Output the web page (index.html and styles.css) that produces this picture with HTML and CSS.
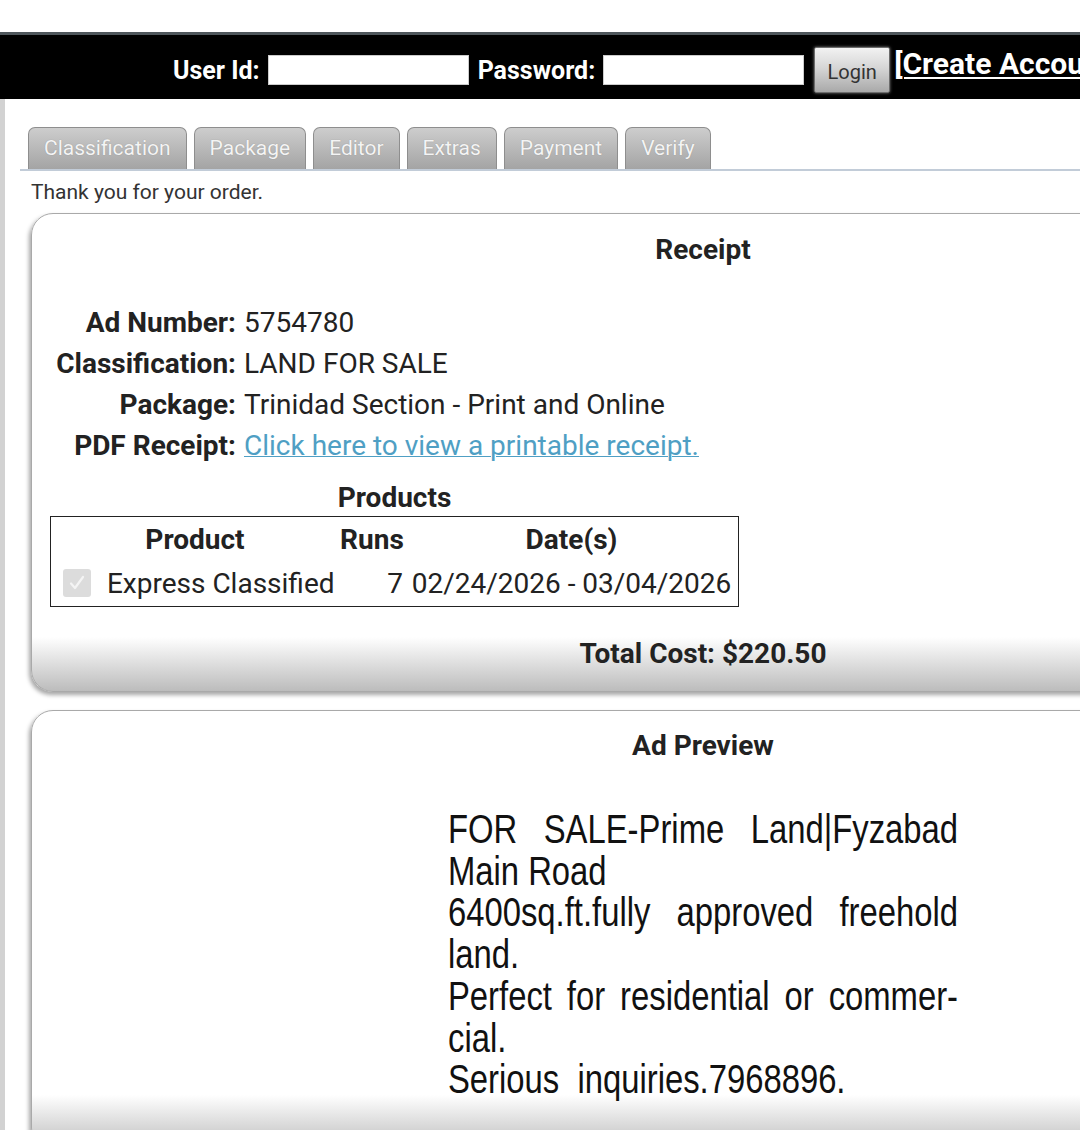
FILE: index.html
```html
<!DOCTYPE html>
<html lang="en">
<head>
    <meta charset="UTF-8">
    <meta name="viewport" content="width=device-width, initial-scale=1.0">
    <title>Classified Ad - Receipt</title>
    <link rel="stylesheet" href="styles.css">
</head>
<body>
    <div class="top-gap"></div>

    <form class="login-bar">
        <label for="userId">User Id:</label>
        <input type="text" id="userId">
        <label for="password">Password:</label>
        <input type="password" id="password">
        <button type="button" class="login-button">Login</button>
        <a href="#" class="create-account">[Create Account]</a>
    </form>

    <div class="page">
        <ul class="tabs">
            <li>Classification</li>
            <li>Package</li>
            <li>Editor</li>
            <li>Extras</li>
            <li>Payment</li>
            <li>Verify</li>
        </ul>

        <p class="thanks">Thank you for your order.</p>

        <div class="panel receipt">
            <h3>Receipt</h3>

            <div class="receipt-body">
                <div class="details">
                    <span class="label">Ad Number:</span><span>5754780</span>
                    <span class="label">Classification:</span><span>LAND FOR SALE</span>
                    <span class="label">Package:</span><span>Trinidad Section - Print and Online</span>
                    <span class="label">PDF Receipt:</span><a href="#">Click here to view a printable receipt.</a>
                </div>

                <div class="products">
                    <h4>Products</h4>
                    <table>
                        <colgroup>
                            <col class="col-product">
                            <col class="col-runs">
                            <col class="col-dates">
                        </colgroup>
                        <thead>
                            <tr>
                                <th>Product</th>
                                <th>Runs</th>
                                <th>Date(s)</th>
                            </tr>
                        </thead>
                        <tbody>
                            <tr>
                                <td class="product-name">
                                    <span class="check">
                                        <svg viewBox="0 0 28 28" width="28" height="28"><path d="M8 14.5l4 4.5 8-11" fill="none" stroke="#f4f4f4" stroke-width="2.2" stroke-linecap="round" stroke-linejoin="round"/></svg>
                                    </span>
                                    Express Classified
                                </td>
                                <td class="runs">7</td>
                                <td class="dates">02/24/2026 - 03/04/2026</td>
                            </tr>
                        </tbody>
                    </table>
                </div>
            </div>

            <div class="total">Total Cost: $220.50</div>
        </div>

        <div class="panel preview">
            <h3>Ad Preview</h3>

            <div class="ad-text">
                <p><span class="just">FOR SALE-Prime Land|Fyzabad</span><span>Main Road</span></p>
                <p><span class="just">6400sq.ft.fully approved freehold</span><span>land.</span></p>
                <p><span class="just">Perfect for residential or commer-</span><span>cial.</span></p>
                <p><span>Serious&nbsp; inquiries.7968896.</span></p>
            </div>
        </div>
    </div>
</body>
</html>
```

FILE: styles.css
```css
body {
    margin: 0;
    font-family: Roboto, "Liberation Sans", sans-serif;
    color: #222;
    background: #fff;
    overflow: hidden;
    width: 1080px;
    height: 1130px;
}

.top-gap {
    height: 32px;
}

/* login bar */

.login-bar {
    width: 1400px;
    height: 58px;
    padding-top: 6px;
    margin: 0;
    background: #000;
    border-top: 3px solid #4e565b;
    display: flex;
    align-items: center;
    padding-left: 173px;
    box-sizing: content-box;
}

.login-bar label {
    color: #fff;
    font-weight: bold;
    font-size: 25px;
    margin-right: 8px;
}

.login-bar input {
    width: 201px;
    height: 30px;
    box-sizing: border-box;
    border: 1px solid #ccc;
    background: #fff;
    margin-right: 9px;
}

.login-button {
    width: 76px;
    height: 46px;
    margin-left: 1px;
    margin-right: 4px;
    font-family: Roboto, sans-serif;
    font-size: 20px;
    color: #333;
    background: linear-gradient(#f2f2f2, #d6d6d6 45%, #a9a9a9);
    border: 1px solid #6c6c6c;
    border-radius: 2px;
    box-shadow: 0 0 3px rgba(255, 255, 255, 0.5);
    padding: 4px 0 0 0;
}

.create-account {
    color: #fff;
    font-weight: bold;
    font-size: 30px;
    text-decoration: underline;
    text-decoration-thickness: 2px;
    text-underline-offset: 3px;
    white-space: nowrap;
    margin-top: -14px;
}

/* page */

.page {
    width: 1400px;
    min-height: 1100px;
    border-left: 5px solid #d2d2d2;
    padding-left: 15px;
    padding-top: 28px;
}

.tabs {
    list-style: none;
    margin: 0;
    padding: 0 0 0 8px;
    display: flex;
    gap: 7px;
    border-bottom: 2px solid #c2ccd8;
}

.tabs li {
    height: 42px;
    box-sizing: border-box;
    padding: 8px 15px 0;
    font-size: 21px;
    color: #f4f4f4;
    text-shadow: 0 0 1px rgba(0, 0, 0, 0.25);
    background: linear-gradient(#cdcdcd, #a4a4a4);
    border: 1px solid #8e8e8e;
    border-bottom: none;
    border-radius: 7px 7px 0 0;
}

.thanks {
    margin: 7px 0 0 11px;
    font-size: 21px;
    line-height: 28px;
    color: #333;
}

.panel {
    margin: 7px 0 0 11px;
    width: 1344px;
    box-sizing: border-box;
    border: 1px solid #a9a9a9;
    border-radius: 22px;
    box-shadow: -2px 3px 4px rgba(0, 0, 0, 0.35);
    background: linear-gradient(#fff calc(100% - 54px), #bcbcbc);
}

.panel h3 {
    margin: 0;
    text-align: center;
    font-size: 28px;
    line-height: 32px;
    color: #222;
}

.receipt {
    padding: 20px 0 21px;
}

.receipt-body {
    padding-left: 18px;
    margin-top: 36px;
}

.details {
    display: grid;
    grid-template-columns: 186px auto;
    column-gap: 8px;
    font-size: 28px;
    line-height: 41px;
}

.details .label {
    text-align: right;
    font-weight: bold;
}

.details a {
    color: #4f9fc4;
    text-decoration: underline;
    text-decoration-thickness: 1px;
    justify-self: start;
}

.products {
    width: 689px;
    margin-top: 16px;
}

.products h4 {
    margin: 0 0 2px;
    text-align: center;
    font-size: 28px;
    line-height: 32px;
}

.products table {
    width: 689px;
    table-layout: fixed;
    border-collapse: collapse;
    border: 1px solid #222;
    font-size: 28px;
}

.col-product { width: 288px; }
.col-runs { width: 66px; }
.col-dates { width: 333px; }

.products th {
    height: 44px;
    padding: 0;
    font-size: 28px;
    text-align: center;
}

.products td {
    height: 45px;
    padding: 0;
    white-space: nowrap;
}

.product-name {
    padding-left: 12px !important;
}

.check {
    display: inline-block;
    width: 28px;
    height: 28px;
    background: #dcdcdc;
    border-radius: 3px;
    vertical-align: -4px;
    margin-right: 9px;
}

.check svg {
    display: block;
}

.runs {
    text-align: right;
    padding-right: 2px !important;
}

.dates {
    text-align: center;
}

.total {
    margin-top: 31px;
    text-align: center;
    font-weight: bold;
    font-size: 28px;
    line-height: 32px;
}

/* ad preview */

.preview {
    margin-top: 18px;
    padding: 19px 0 48px;
}

.ad-text {
    width: 622px;
    margin: 47px auto 0;
    font-family: "Liberation Sans", Arial, sans-serif;
    font-size: 40px;
    line-height: 41.7px;
    color: #111;
    transform: scaleX(0.82);
}

.ad-text p {
    margin: 0;
}

.ad-text span {
    display: block;
    white-space: nowrap;
}

.ad-text .just {
    text-align: justify;
    text-align-last: justify;
}
```
